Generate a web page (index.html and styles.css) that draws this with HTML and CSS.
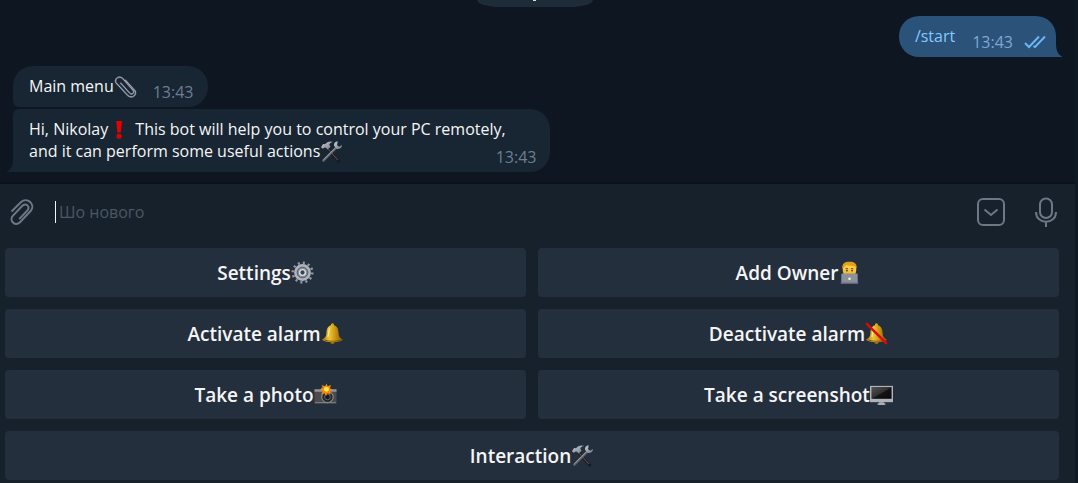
FILE: index.html
```html
<!DOCTYPE html>
<html lang="en">
<head>
<meta charset="utf-8">
<title>Bot chat</title>
<meta name="viewport" content="width=device-width, initial-scale=1">
<link rel="stylesheet" href="styles.css">
</head>
<body>
<svg class="defs" aria-hidden="true">
  <defs>
    <linearGradient id="gold" x1="0" x2="1"><stop offset="0" stop-color="#b07c06"/><stop offset=".35" stop-color="#ecc53c"/><stop offset=".6" stop-color="#cf9a12"/><stop offset="1" stop-color="#825504"/></linearGradient>
    <linearGradient id="steel" x1="0" y1="0" x2="1" y2="1"><stop offset="0" stop-color="#cdd2d8"/><stop offset="1" stop-color="#6c747f"/></linearGradient>
    <linearGradient id="screen" x1="0" y1="0" x2="1" y2="1"><stop offset="0" stop-color="#555"/><stop offset=".5" stop-color="#303030"/><stop offset=".52" stop-color="#151515"/><stop offset="1" stop-color="#080808"/></linearGradient>
    <linearGradient id="skin" x1="0" y1="0" x2="0" y2="1"><stop offset="0" stop-color="#ffdf5c"/><stop offset="1" stop-color="#f4ad22"/></linearGradient>
    <symbol id="tools" viewBox="0 0 24 24">
      <path d="M8 9 19.5 22" stroke="#17191d" stroke-width="3" stroke-linecap="round"/>
      <path d="M8 9 18.8 21" stroke="#5a4a46" stroke-width="1.2"/>
      <path d="M3.5 21.5 17 8" stroke="#5d6168" stroke-width="2.600" stroke-linecap="round"/>
      <path d="M3.500 20.800 16.500 7.800" stroke="#a4a9b0" stroke-width="1"/>
      <path d="M18.500 1.200c-2.800.1-4.400 2.500-3.700 5l2.800 3.200c2.800.6 5.300-1.300 5.400-4.200l-3 1.800-2.200-1.600z" fill="url(#steel)"/>
      <path d="m1 7.500 2.200-3.400 2 .4C7.200 1.500 10.500.8 14 2c-2.500.2-4 1.300-4.300 3l1.300 2-3 3-2.700-2.500L3 9z" fill="url(#steel)"/>
    </symbol>
    <symbol id="bell" viewBox="0 0 24 24">
      <circle cx="12" cy="20.600" r="2.400" fill="#a86f08"/>
      <path d="M10.400 3.500C10.200.6 13.800.6 13.600 3.500c3.700 1 4.600 4.500 4.800 8.500.1 3.500 1.600 4.600 4.600 6.500-3.500 3.300-18.500 3.300-22 0 3-1.900 4.500-3 4.600-6.500.200-4 1.100-7.500 4.800-8.500z" fill="url(#gold)"/>
      <path d="M3 18.600c5 2 13 2 18 0" stroke="#84570a" fill="none"/>
      <path d="M9 6.500C7.900 9 8.300 12 7.200 15.500" stroke="#ffe98d" stroke-width="1.300" fill="none"/>
    </symbol>
  </defs>
</svg>
<div class="app">
  <main class="chat">
    <div class="date-pill" aria-hidden="true"></div>
    <article class="bubble bubble-out">
      <span class="command">/start</span>
      <span class="meta"><time>13:43</time>
        <svg class="ticks" viewBox="0 0 22 14" aria-label="Read"><path d="m1 8 4 4L15 1.500M9.500 11l1.500 1L21 1.500" fill="none" stroke="currentColor" stroke-width="2"/></svg>
      </span>
      <svg class="tail tail-right" viewBox="0 0 8 14" aria-hidden="true"><path d="M0 0v14h8C3 12 1 8 1 0z" fill="currentColor"/></svg>
    </article>
    <article class="bubble bubble-short">
      <span>Main menu<svg class="emoji" viewBox="0 0 24 24" role="img" aria-label="paperclip"><g fill="none" stroke-linecap="round"><path d="M7 8.500 16.500 19c2 2 5 0 3.500-3L9 3.500C5.500.3.200 3.500 2 8l12.500 13.500c4.500 3.500 9.500-.5 7.500-5L12 5.500" stroke="#59616f" stroke-width="1.800"/><path d="M7 8.500 16.500 19c2 2 5 0 3.500-3L9 3.500C5.500.3.200 3.500 2 8l12.500 13.500c4.500 3.500 9.500-.5 7.500-5L12 5.500" stroke="#a3adbb" stroke-width="1"/></g></svg></span>
      <time class="meta">13:43</time>
    </article>
    <article class="bubble bubble-long">
      <p>Hi, Nikolay<svg class="emoji" viewBox="0 0 24 24" role="img" aria-label="exclamation mark"><path d="M8.600 3h6l-1.200 12h-3.600z" fill="#e80000"/><circle cx="11.600" cy="19" r="2.700" fill="#d90000"/></svg> This bot will help you to control your PC remotely,<br>and it can perform some useful actions<svg class="emoji" role="img" aria-label="tools"><use href="#tools"/></svg></p>
      <time class="meta">13:43</time>
      <svg class="tail tail-left" viewBox="0 0 8 14" aria-hidden="true"><path d="M8 0v14H0c5-2 7-6 7-14z" fill="currentColor"/></svg>
    </article>
  </main>
  <form class="composer">
    <button class="icon-button" type="button" aria-label="Attach">
      <svg class="icon-clip" viewBox="0 0 24 28"><path d="M1.500 12.500 10.800 3.200c6.500-5.500 15 2 10 8.600L10 23.300c-5 4.500-11.200-1.800-7.200-6.500l9.800-10.200c3.600-2.900 7.600.8 5 4.600l-8.400 8.900" transform="translate(0 1)" fill="none" stroke="currentColor" stroke-width="2"/></svg>
    </button>
    <span class="caret"></span>
    <input class="message" type="text" placeholder="Шо нового" aria-label="Message">
    <button class="icon-button keyboard-toggle" type="button" aria-label="Hide keyboard">
      <svg class="icon-box" viewBox="0 0 28 28"><rect x="1" y="1" width="26" height="26" rx="5" fill="none" stroke="currentColor" stroke-width="2"/><path d="m7.500 11.500 6.500 5.500 6.500-5.500" fill="none" stroke="currentColor" stroke-width="2"/></svg>
    </button>
    <button class="icon-button" type="button" aria-label="Record voice message">
      <svg class="icon-mic" viewBox="0 0 24 30"><rect x="6" y="1.500" width="12" height="19.500" rx="6" fill="none" stroke="currentColor" stroke-width="2"/><path d="M2 15c0 13 20 13 20 0M12 24.500V30" fill="none" stroke="currentColor" stroke-width="2"/></svg>
    </button>
  </form>
  <section class="keyboard" aria-label="Bot keyboard">
    <button class="key" type="button">Settings<svg class="emoji" viewBox="0 0 24 24" aria-hidden="true"><circle cx="12" cy="12" r="10.200" fill="none" stroke="#9299a5" stroke-width="2.600" stroke-dasharray="2.200 3.140"/><circle cx="12" cy="12" r="7.300" fill="#858a94" stroke="#aeb4be" stroke-width="3"/><circle cx="12" cy="12" r="5.600" fill="none" stroke="#555b66"/><circle cx="12" cy="12" r="3" fill="#3b424e" stroke="#dce0e5" stroke-width="1.500"/></svg></button>
    <button class="key" type="button">Add Owner<svg class="emoji" viewBox="0 0 24 24" aria-hidden="true"><path d="M2.500 23.500c0-5 2-8 5-8h9c3 0 5 3 5 8z" fill="#2932a8"/><rect x="5" y="2" width="14" height="14" rx="6" fill="url(#skin)"/><path d="M4.500 8C4 2.500 7 .7 12 .7s8 1.800 7.500 7.300l-2-2.500c-4 0-7-.5-9-1.500C8 6 6 7 4.500 8z" fill="#e59f1c"/><path d="M8 8h2.500M13.500 8H16" stroke="#70430c"/><circle cx="9.300" cy="10" r="1" fill="#543513"/><circle cx="14.700" cy="10" r="1" fill="#543513"/><rect x="3.500" y="13" width="17" height="10" rx="1" fill="#8c9199"/><path d="M3 23h18" stroke="#747983" stroke-width="1.500"/><circle cx="12" cy="18.500" r="1.300" fill="#f4f4f4"/></svg></button>
    <button class="key" type="button">Activate alarm<svg class="emoji" aria-hidden="true"><use href="#bell"/></svg></button>
    <button class="key" type="button">Deactivate alarm<svg class="emoji" viewBox="0 0 24 24" aria-hidden="true"><use href="#bell"/><path d="m2 2 20 20" stroke="#df0909" stroke-width="2.600" stroke-linecap="round"/></svg></button>
    <button class="key" type="button">Take a photo<svg class="emoji" viewBox="0 0 24 24" aria-hidden="true"><path d="M.5 7h23v14.500H.5z" fill="#4b4b4d"/><path d="M.5 6.500h7V5h9v1.500h7V9H.5z" fill="#92949a"/><path d="M1 20.500h22" stroke="#83868b"/><circle cx="14" cy="14.500" r="6" fill="#242629" stroke="#85888e" stroke-width="1.200"/><circle cx="14" cy="14.500" r="3" fill="#17191c" stroke="#666b74"/><path d="m13 .5 1.300 3 3.500-1.500-1.200 3.400 3 1.600-3 1.500 1 3.500-3.400-1.400-1.700 3-1.500-3-3.500 1.300 1.500-3.300-3-1.600 3.200-1.500L8 2l3.500 1.500z" fill="#f48a0c"/><circle cx="13" cy="6.500" r="2.600" fill="#ffe54b"/></svg></button>
    <button class="key" type="button">Take a screenshot<svg class="emoji" viewBox="0 0 24 24" aria-hidden="true"><path d="M9.500 19h5v3h-5z" fill="#8e9198"/><path d="M8 22h8" stroke="#c5c8ce" stroke-width="1.500"/><path d="M0 3h24v17H0z" fill="#aeb2b9"/><path d="M1.500 4.200h21v12.300h-21z" fill="url(#screen)"/></svg></button>
    <button class="key key-wide" type="button">Interaction<svg class="emoji" aria-hidden="true"><use href="#tools"/></svg></button>
  </section>
</div>
</body>
</html>
```
FILE: styles.css
```css
* { box-sizing: border-box; }

body {
  margin: 0;
  background: #0e1621;
  color: #f5f5f5;
  font: 16px/22px "Open Sans", "Noto Sans", sans-serif;
}

button, input { font: inherit; color: inherit; border: 0; background: none; padding: 0; }
p { margin: 0; }

.defs { position: absolute; width: 0; height: 0; }

.app {
  min-height: 100vh;
  display: flex;
  flex-direction: column;
  border-right: 3px solid #0f1923;
  background: #17212b;
}

.chat {
  flex: 1;
  display: flex;
  flex-direction: column;
  align-items: flex-start;
  padding: 0 19px 10px 13px;
  background: #0e1621;
  border-bottom: 2px solid #0a121b;
}

.date-pill {
  align-self: center;
  width: 116px;
  height: 7px;
  margin-bottom: 9px;
  border-radius: 0 0 24px 24px / 0 0 7px 7px;
  background: #1e2c3a;
}

.date-pill::before {
  content: "";
  display: block;
  width: 3px;
  height: 1px;
  margin: 0 auto;
  background: #d4dce2;
}

.bubble {
  position: relative;
  display: flex;
  align-items: flex-end;
  background: #182533;
}

.bubble-out {
  align-self: flex-end;
  gap: 17px;
  margin-bottom: 9px;
  padding: 9px 10px 4px 16px;
  border-radius: 20px 20px 0 20px;
  background: #2b5278;
  color: #e4ecf2;
}

.command { padding-bottom: 6px; color: #83caff; }

.bubble-short {
  gap: 16px;
  margin-bottom: 2px;
  padding: 9px 14px 4px 16px;
  border-radius: 20px 20px 20px 6px;
}

.bubble-short > span { padding-bottom: 6px; }

.bubble-long {
  padding: 9px 14px 4px 16px;
  border-radius: 6px 20px 20px 0;
}

.bubble-long p { padding-bottom: 6px; }
.bubble-long .meta { margin-left: -10px; }

.meta { display: flex; align-items: center; color: #6d7f8f; }
.bubble-out .meta { gap: 11px; color: #7da8d3; }

.ticks { width: 22px; height: 14px; color: #6ab7f5; }

.tail { position: absolute; bottom: 0; width: 8px; height: 14px; }
.tail-right { left: calc(100% - 1px); color: #2b5278; }
.tail-left { right: calc(100% - 1px); color: #182533; }

.emoji { width: 23px; height: 23px; margin: -2px 0; vertical-align: -4px; fill: none; }

.composer {
  display: flex;
  align-items: center;
  height: 64px;
  padding: 0 17px 8px 10px;
}

.icon-button { display: flex; color: #6c7883; }
.icon-clip { width: 24px; height: 28px; }
.icon-box { width: 28px; height: 28px; }
.icon-mic { width: 24px; height: 30px; }
.keyboard-toggle { margin-right: 29px; }

.caret { width: 1px; height: 22px; margin: 0 3px 0 21px; background: #f5f5f5; }
.message { flex: 1; min-width: 0; outline: 0; }
.message::placeholder { color: #4b5764; opacity: 1; }

.keyboard {
  display: grid;
  grid-template-columns: 1fr 1fr;
  gap: 12px;
  padding: 0 16px 3px 5px;
}

.key {
  display: flex;
  align-items: center;
  justify-content: center;
  height: 49px;
  border-radius: 4px;
  background: #242f3d;
  font-size: 19px;
  font-weight: 600;
}

.key-wide { grid-column: 1 / -1; }
```
